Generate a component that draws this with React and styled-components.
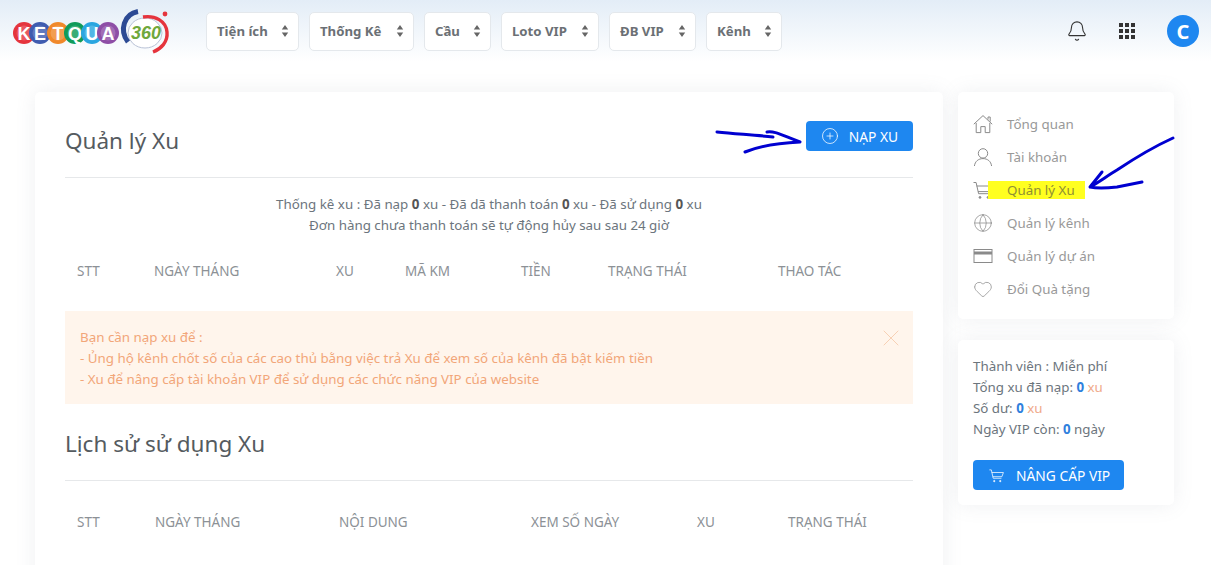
import React from 'react'
import styled, { createGlobalStyle } from 'styled-components'
import { Bell, Globe, Heart, PlusCircle, X } from 'lucide-react'

const GlobalStyle = createGlobalStyle`
    html, body {
        margin: 0;
        height: 100%;
        overflow: hidden;
        background: #fff;
        font-family: "Noto Sans", "Open Sans", sans-serif;
        font-size: 13.35px;
        color: #6c757d;
    }
`

const navItems = [
    { label: 'Tiện ích', width: 93 },
    { label: 'Thống Kê', width: 105 },
    { label: 'Cầu', width: 67 },
    { label: 'Loto VIP', width: 98 },
    { label: 'ĐB VIP', width: 87 },
    { label: 'Kênh', width: 76 },
]

const historyColumns = ['STT', 'NGÀY THÁNG', 'NỘI DUNG', 'XEM SỐ NGÀY', 'XU', 'TRẠNG THÁI']
const orderColumns = ['STT', 'NGÀY THÁNG', 'XU', 'MÃ KM', 'TIỀN', 'TRẠNG THÁI', 'THAO TÁC']

function HomeIcon() {
    return (
        <svg width="20" height="20" viewBox="0 0 20 20" fill="none" stroke="#8a8a8a" strokeWidth="1">
            <path d="M.8 10.2 10 1.6l9.2 8.6" />
            <path d="M15 3v2.6M15 3h2.2v4.6" />
            <path d="M3.2 9v9.6h4.6v-6h4.4v6h4.6V9" />
        </svg>
    )
}

function UserIcon() {
    return (
        <svg width="20" height="20" viewBox="0 0 20 20" fill="none" stroke="#8a8a8a" strokeWidth="1">
            <circle cx="10" cy="6.4" r="4.7" />
            <path d="M1.4 19c.6-4.6 4-7.4 8.6-7.4s8 2.8 8.6 7.4" />
        </svg>
    )
}

function CartIcon({ color = '#8a8a8a', size = 20 }) {
    return (
        <svg width={size} height={size} viewBox="0 0 20 20" fill="none" stroke={color} strokeWidth="1">
            <path d="M.5 2.5h2.6l2.5 11.2h11" />
            <path d="M3.6 6h15.6l-2 5.6H5" />
            <circle cx="7" cy="17.4" r=".9" fill={color} />
            <circle cx="15" cy="17.4" r=".9" fill={color} />
        </svg>
    )
}

function CardIcon() {
    return (
        <svg width="20" height="20" viewBox="0 0 20 20" fill="none" stroke="#8a8a8a">
            <rect x="1" y="3.5" width="18" height="13" />
            <rect x="1" y="5.5" width="18" height="3" fill="#8a8a8a" stroke="none" />
        </svg>
    )
}

function UpDown() {
    return (
        <svg width="8" height="12" viewBox="0 0 8 12" fill="#666">
            <path d="M4 0l3.2 4.6H.8zM4 12L.8 7.4h6.4z" />
        </svg>
    )
}

function Logo() {
    const balls = [
        { cx: 24, fill: '#e5343d', t: 'K' },
        { cx: 40, fill: '#3f5cb0', t: 'E' },
        { cx: 58, fill: '#f0892b', t: 'T' },
        { cx: 75, fill: '#0f9b5a', t: 'Q' },
        { cx: 92, fill: '#2aa6e0', t: 'U' },
        { cx: 108, fill: '#8e4ea6', t: 'A' },
    ]
    return (
        <svg width="172" height="56" viewBox="0 0 172 56">
            {balls.map(b => (
                <g key={b.t}>
                    <circle cx={b.cx} cy="33" r="11" fill={b.fill} />
                    <circle cx={b.cx} cy="33" r="7.5" fill="#fff" fillOpacity=".18" />
                    <text x={b.cx} y="39.5" textAnchor="middle" fontFamily="Liberation Sans" fontWeight="700" fontSize="18" fill="#fff">{b.t}</text>
                </g>
            ))}
            <ellipse cx="145" cy="33" rx="17" ry="15" fill="#fff" stroke="#b9c2d6" strokeWidth="1" />
            <path d="M138 11.5C124 14 119 30 128 42" fill="none" stroke="#2c4a94" strokeWidth="5" />
            <path d="M143 17c12-2 23 4 24 15 1 10-6 17-14 20" fill="none" stroke="#e5343d" strokeWidth="3.4" />
            <text x="146" y="39" textAnchor="middle" fontFamily="Liberation Sans" fontWeight="700" fontStyle="italic" fontSize="18" fill="#6fa83c">360</text>
            <circle cx="165" cy="14" r="2.4" fill="#e5343d" />
        </svg>
    )
}

function App() {
    return (
        <Page>
            <GlobalStyle />
            <Header>
                <LogoBox><Logo /></LogoBox>
                <Nav>
                    {navItems.map(item => (
                        <NavButton key={item.label} $width={item.width}>
                            {item.label}
                            <UpDown />
                        </NavButton>
                    ))}
                </Nav>
                <HeaderTools>
                    <Bell size={22} strokeWidth={1.2} color="#333" />
                    <Dots>
                        {Array.from({ length: 9 }).map((_, i) => <i key={i} />)}
                    </Dots>
                    <Avatar>C</Avatar>
                </HeaderTools>
            </Header>

            <Content>
                <MainCard>
                    <TitleRow>
                        <Title>Quản lý Xu</Title>
                        <PrimaryButton>
                            <PlusCircle size={18} strokeWidth={1} />
                            NẠP XU
                        </PrimaryButton>
                    </TitleRow>
                    <Stats>
                        <div>Thống kê xu : Đã nạp <b>0</b> xu - Đã dã thanh toán <b>0</b> xu - Đã sử dụng <b>0</b> xu</div>
                        <div>Đơn hàng chưa thanh toán sẽ tự động hủy sau sau 24 giờ</div>
                    </Stats>
                    <TableHead $cols="77px 182px 69px 116px 87px 170px 1fr">
                        {orderColumns.map(c => <span key={c}>{c}</span>)}
                    </TableHead>
                    <Alert>
                        <div>Bạn cần nạp xu để :</div>
                        <div>- Ủng hộ kênh chốt số của các cao thủ bằng việc trả Xu để xem số của kênh đã bật kiếm tiền</div>
                        <div>- Xu để nâng cấp tài khoản VIP để sử dụng các chức năng VIP của website</div>
                        <CloseIcon><X size={28} strokeWidth={0.8} /></CloseIcon>
                    </Alert>
                    <TitleRow $second>
                        <Title>Lịch sử sử dụng Xu</Title>
                    </TitleRow>
                    <TableHead $cols="78px 184px 192px 166px 91px 1fr" $last>
                        {historyColumns.map(c => <span key={c}>{c}</span>)}
                    </TableHead>
                </MainCard>

                <Sidebar>
                    <SideCard $menu>
                        <MenuItem><HomeIcon />Tổng quan</MenuItem>
                        <MenuItem><UserIcon />Tài khoản</MenuItem>
                        <MenuItem><CartIcon /><Highlight>Quản lý Xu</Highlight></MenuItem>
                        <MenuItem><IconSlot><Globe size={24} strokeWidth={0.9} color="#8a8a8a" /></IconSlot>Quản lý kênh</MenuItem>
                        <MenuItem><CardIcon />Quản lý dự án</MenuItem>
                        <MenuItem><IconSlot><Heart size={24} strokeWidth={0.9} color="#8a8a8a" /></IconSlot>Đổi Quà tặng</MenuItem>
                    </SideCard>
                    <SideCard>
                        <InfoLine>Thành viên : Miễn phí</InfoLine>
                        <InfoLine>Tổng xu đã nạp: <Num>0</Num> <Unit>xu</Unit></InfoLine>
                        <InfoLine>Số dư: <Num>0</Num> <Unit>xu</Unit></InfoLine>
                        <InfoLine>Ngày VIP còn: <Num>0</Num> ngày</InfoLine>
                        <UpgradeButton>
                            <CartIcon color="#fff" size={15} />
                            NÂNG CẤP VIP
                        </UpgradeButton>
                    </SideCard>
                </Sidebar>
            </Content>

            {/* hand drawn arrows on top of the screenshot */}
            <Scribble width="1211" height="565" viewBox="0 0 1211 565">
                <path d="M717 132c20 2 38 3 56 5M767 132c8-1 12 2 33 10-20 1-38 3-55 10" />
                <path d="M1173 138c-22 10-38 20-56 32-10 6-18 12-27 17M1102 172l-12 15c9 2 18 1 27 0l25-5" />
            </Scribble>
        </Page>
    )
}

const Page = styled.div`
    position: relative;
    height: 565px;
    overflow: hidden;
    background: linear-gradient(180deg, #e3edf7 0, #fff 62px);
`

const Header = styled.header`
    display: flex;
    align-items: center;
    height: 62px;
    padding-right: 12px;
`

const LogoBox = styled.div`
    width: 206px;
    flex: none;
    height: 62px;
`

const Nav = styled.nav`
    display: flex;
    gap: 10px;
`

const NavButton = styled.div`
    box-sizing: border-box;
    width: ${p => p.$width}px;
    height: 39px;
    display: flex;
    align-items: center;
    justify-content: space-between;
    padding: 0 9px 0 10px;
    background: #fff;
    border: 1px solid #e4e8ec;
    border-radius: 5px;
    font-weight: 700;
    font-size: 13.2px;
    color: #6b7075;
`

const HeaderTools = styled.div`
    margin-left: auto;
    display: flex;
    align-items: center;
`

const Dots = styled.div`
    display: grid;
    grid-template-columns: repeat(3, 4px);
    gap: 2px;
    margin: 0 32px 0 31px;
    i {
        width: 4px;
        height: 4px;
        background: #333;
    }
`

const Avatar = styled.div`
    width: 32px;
    height: 32px;
    border-radius: 50%;
    background: #1e87f0;
    color: #fff;
    font-weight: 700;
    font-size: 20px;
    display: flex;
    align-items: center;
    justify-content: center;
`

const Content = styled.main`
    display: flex;
    align-items: flex-start;
    gap: 15px;
    padding: 30px 0 0 35px;
`

const MainCard = styled.section`
    box-sizing: border-box;
    width: 908px;
    flex: none;
    height: 600px;
    padding: 30px;
    background: #fff;
    border-radius: 5px;
    box-shadow: 0 0 20px rgba(120, 130, 150, 0.12);
`

const TitleRow = styled.div`
    display: flex;
    justify-content: space-between;
    align-items: flex-start;
    height: 55px;
    margin-top: ${p => (p.$second ? '21px' : '0')};
    border-bottom: 1px solid #e6e8ea;
`

const Title = styled.h2`
    margin: 0;
    font-weight: 400;
    font-size: 22.5px;
    line-height: 38px;
    color: #555b60;
`

const PrimaryButton = styled.div`
    box-sizing: border-box;
    width: 107px;
    height: 30px;
    margin-top: -1px;
    display: flex;
    align-items: center;
    justify-content: center;
    gap: 10px;
    background: #1e87f0;
    color: #fff;
    border-radius: 4px;
    font-size: 13.8px;
`

const Stats = styled.div`
    padding-top: 16px;
    text-align: center;
    line-height: 21px;
    color: #6c757d;
    b {
        color: #555;
    }
`

const TableHead = styled.div`
    display: grid;
    grid-template-columns: ${p => p.$cols};
    padding: ${p => (p.$last ? '31px 0 0 12px' : '25px 0 30px 12px')};
    line-height: 20px;
    font-size: 13.5px;
    color: #8c9196;
`

const Alert = styled.div`
    position: relative;
    box-sizing: border-box;
    height: 93px;
    padding: 16px 15px 0;
    background: #fff5ec;
    color: #f2a679;
    line-height: 21px;
`

const CloseIcon = styled.span`
    position: absolute;
    top: 13px;
    right: 8px;
    color: #f6cdb0;
`

const Sidebar = styled.aside`
    width: 216px;
    flex: none;
    display: flex;
    flex-direction: column;
    gap: 21px;
`

const SideCard = styled.div`
    padding: ${p => (p.$menu ? '15px 15px 14px' : '16px 15px 15px')};
    background: #fff;
    border-radius: 5px;
    box-shadow: 0 0 20px rgba(120, 130, 150, 0.12);
`

const MenuItem = styled.div`
    display: flex;
    align-items: center;
    gap: 14px;
    height: 33px;
    color: #999;
`

const IconSlot = styled.span`
    width: 20px;
    height: 24px;
    display: flex;
    justify-content: center;
`

const Highlight = styled.span`
    margin-left: -19px;
    padding: 0 10px 0 19px;
    background: #ffff20;
    line-height: 18px;
    color: #8f8f33;
`

const InfoLine = styled.div`
    line-height: 21px;
    color: #6c757d;
`

const Num = styled.b`
    color: #2f80dd;
`

const Unit = styled.span`
    color: #f0a98a;
`

const UpgradeButton = styled.div`
    box-sizing: border-box;
    width: 151px;
    height: 30px;
    margin-top: 20px;
    padding-left: 16px;
    display: flex;
    align-items: center;
    gap: 12px;
    background: #1e87f0;
    color: #fff;
    border-radius: 4px;
    font-size: 13.8px;
`

const Scribble = styled.svg`
    position: absolute;
    top: 0;
    left: 0;
    pointer-events: none;
    path {
        fill: none;
        stroke: #0000d0;
        stroke-width: 3;
        stroke-linecap: round;
        stroke-linejoin: round;
    }
`

export default App
